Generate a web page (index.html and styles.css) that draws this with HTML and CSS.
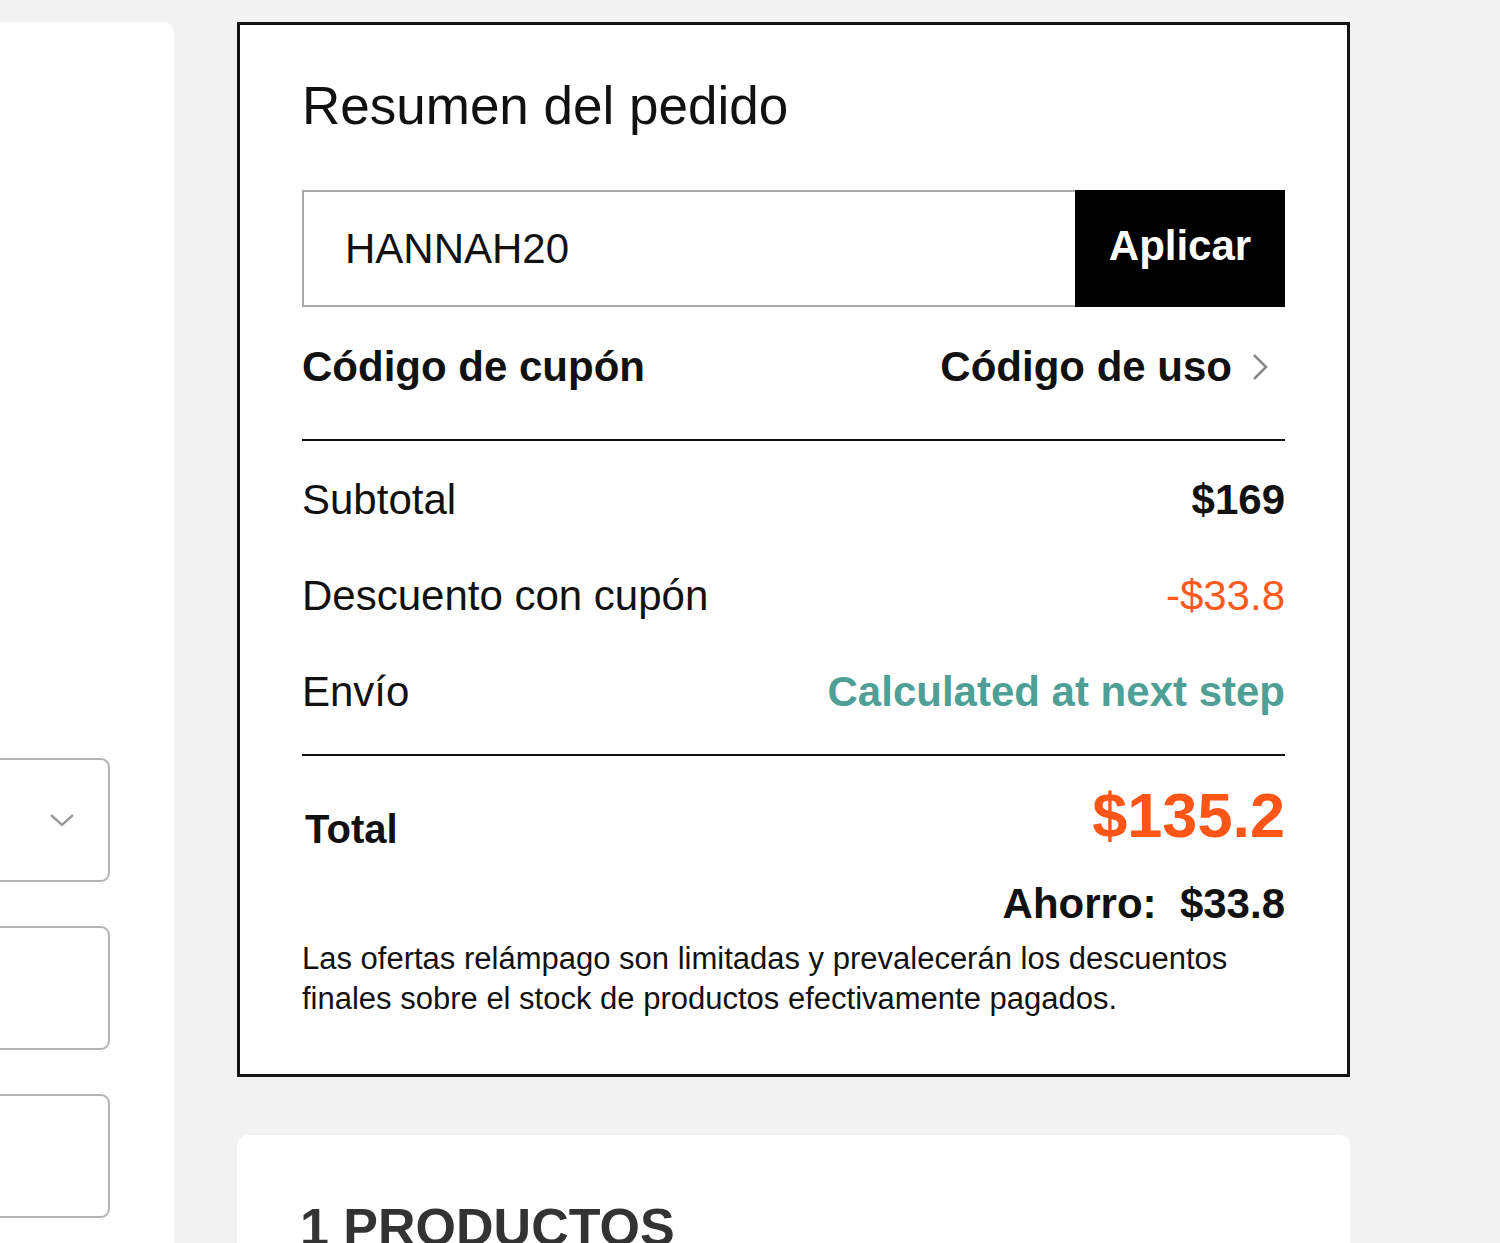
FILE: index.html
```html
<!DOCTYPE html>
<html lang="es">
<head>
<meta charset="utf-8">
<title>Resumen del pedido</title>
<link rel="stylesheet" href="styles.css">
</head>
<body>
<div class="page">
  <aside class="left-card">
    <div class="field field-select">
      <svg class="chev-down" width="26" height="16" viewBox="0 0 26 16"><path d="M2 3 L13 13 L24 3" fill="none" stroke="#9a9a9a" stroke-width="2.4"/></svg>
    </div>
    <div class="field"></div>
    <div class="field"></div>
  </aside>
  <main class="right-col">
    <section class="summary">
      <h1 class="title">Resumen del pedido</h1>
      <div class="coupon-form">
        <div class="coupon-input">HANNAH20</div>
        <button class="apply-btn">Aplicar</button>
      </div>
      <div class="coupon-links">
        <span class="link-left">Código de cupón</span>
        <span class="link-right">Código de uso
          <svg class="chev-right" width="20" height="32" viewBox="0 0 20 32"><path d="M4 4 L16 16 L4 28" fill="none" stroke="#8a8a8a" stroke-width="2.6"/></svg>
        </span>
      </div>
      <hr class="divider divider-top">
      <div class="row"><span>Subtotal</span><span class="val-bold">$169</span></div>
      <div class="row"><span>Descuento con cupón</span><span class="val-discount">-$33.8</span></div>
      <div class="row"><span>Envío</span><span class="val-ship">Calculated at next step</span></div>
      <hr class="divider divider-bottom">
      <div class="total-row">
        <span class="total-label">Total</span>
        <span class="total-price">$135.2</span>
      </div>
      <div class="savings">Ahorro:&nbsp; $33.8</div>
      <p class="note">Las ofertas relámpago son limitadas y prevalecerán los descuentos finales sobre el stock de productos efectivamente pagados.</p>
    </section>
    <section class="products">
      <h2 class="products-title">1 PRODUCTOS</h2>
    </section>
  </main>
</div>
</body>
</html>
```
FILE: styles.css
```css
* { box-sizing: border-box; }
html, body {
  margin: 0;
  padding: 0;
  background: #f2f2f3;
  font-family: "Liberation Sans", Arial, sans-serif;
  color: #111;
  overflow: hidden;
}
.page {
  display: flex;
  align-items: flex-start;
  gap: 63px;
  padding-top: 22px;
  height: 1243px;
}
.left-card {
  width: 174px;
  height: 1300px;
  background: #fff;
  border-radius: 0 10px 0 0;
  padding: 736px 64px 0 0;
  display: flex;
  flex-direction: column;
  gap: 44px;
}
.field {
  height: 124px;
  border: 2px solid #b4b4b8;
  border-left: none;
  border-radius: 0 9px 9px 0;
  display: flex;
  align-items: center;
  justify-content: flex-end;
  padding-right: 33px;
}
.chev-down { display: block; }
.right-col {
  width: 1113px;
  display: flex;
  flex-direction: column;
  gap: 58px;
}
.summary {
  background: #fff;
  border: 3px solid #141414;
  padding: 50px 62px 55px 62px;
}
.title {
  margin: 0;
  font-size: 53px;
  line-height: 62px;
  font-weight: 400;
  color: #111;
}
.coupon-form {
  margin-top: 53px;
  display: flex;
  height: 117px;
}
.coupon-input {
  flex: 1;
  border: 2px solid #a9a9ad;
  border-right: none;
  display: flex;
  align-items: center;
  padding-left: 41px;
  font-size: 42px;
  color: #111;
}
.apply-btn {
  width: 210px;
  background: #000;
  color: #fff;
  border: none;
  font-family: inherit;
  font-size: 42px;
  font-weight: 700;
  padding: 0 0 6px 0;
  margin: 0;
}
.coupon-links {
  margin-top: 35px;
  display: flex;
  justify-content: space-between;
  align-items: center;
  font-size: 42px;
  line-height: 50px;
  font-weight: 700;
}
.link-right {
  display: flex;
  align-items: center;
  gap: 18px;
  padding-right: 15px;
}
.chev-right { display: block; }
.divider {
  border: none;
  border-top: 2px solid #111;
  margin: 0;
}
.divider-top { margin-top: 47px; }
.divider-bottom { margin-top: 14px; }
.row {
  display: flex;
  justify-content: space-between;
  font-size: 42px;
  line-height: 96px;
  height: 96px;
}
.divider-top + .row { margin-top: 11px; }
.val-bold { font-weight: 700; }
.val-discount { color: #ff5a1e; }
.val-ship { color: #4e9f96; font-weight: 700; }
.total-row {
  margin-top: 23px;
  display: flex;
  justify-content: space-between;
  align-items: flex-start;
}
.total-label {
  margin-top: 25px;
  padding-left: 3px;
  font-size: 40px;
  line-height: 50px;
  font-weight: 700;
}
.total-price {
  font-size: 63px;
  line-height: 72px;
  font-weight: 700;
  color: #ff5516;
}
.savings {
  margin-top: 25px;
  text-align: right;
  font-size: 42px;
  line-height: 50px;
  font-weight: 700;
}
.note {
  margin: 10px 0 0 0;
  font-size: 31px;
  line-height: 40px;
  color: #111;
}
.products {
  background: #fff;
  border-radius: 10px;
  padding: 62px 63px 40px 63px;
  height: 200px;
}
.products-title {
  margin: 0;
  font-size: 52px;
  line-height: 60px;
  font-weight: 700;
  color: #333;
}
```
